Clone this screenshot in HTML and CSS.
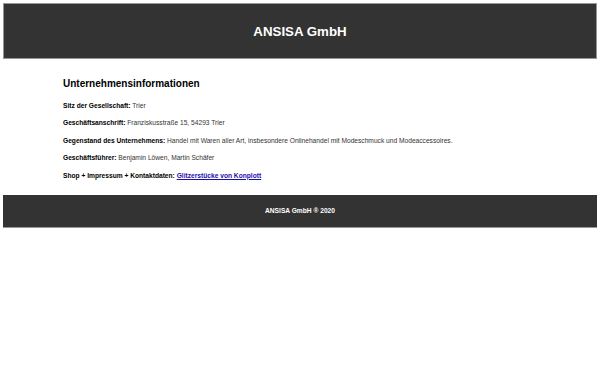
FILE: index.html
```html
<!DOCTYPE html>
<html>

<head>
  <meta charset="UTF-8">
  <title>ANSISA GmbH</title>
  <link rel="stylesheet" href="styles.css">
</head>

<body>
  <header class="header">
    <h1 class="header__title">ANSISA GmbH</h1>
  </header>

  <main class="info">
    <h2 class="info__title">Unternehmensinformationen</h2>
    <p class="info__row"><b>Sitz der Gesellschaft:</b> Trier</p>
    <p class="info__row"><b>Geschäftsanschrift:</b> Franziskusstraße 15, 54293 Trier</p>
    <p class="info__row"><b>Gegenstand des Unternehmens:</b> Handel mit Waren aller Art, insbesondere Onlinehandel mit Modeschmuck und Modeaccessoires.</p>
    <p class="info__row"><b>Geschäftsführer:</b> Benjamin Löwen, Martin Schäfer</p>
    <p class="info__row"><b>Shop + Impressum + Kontaktdaten:</b> <a class="info__link" href="#">Glitzerstücke von Konplott</a></p>
  </main>

  <footer class="footer">
    <p class="footer__text">ANSISA GmbH &reg; 2020</p>
  </footer>
</body>

</html>
```

FILE: styles.css
```css
body {
  margin: 3px;
  font-family: "Liberation Sans", Arial, Helvetica, sans-serif;
  background-color: white;
}

.header {
  height: 54px;
  display: flex;
  justify-content: center;
  align-items: center;
  background-color: rgb(51, 51, 51);
  border: 1px solid rgb(150, 150, 150);
}

.header__title {
  margin: 0;
  font-size: 13.3px;
  font-weight: 700;
  color: white;
}

.info {
  padding: 18px 60px 6px;
}

.info__title {
  margin: 0 0 12px;
  font-size: 10px;
  line-height: 13px;
  font-weight: 700;
  color: black;
}

.info__row {
  margin: 0 0 9.4px;
  font-size: 6.65px;
  line-height: 8px;
  color: rgb(51, 51, 51);
}

.info__row b {
  color: black;
}

.info__link {
  font-weight: 700;
  color: rgb(26, 13, 171);
}

.footer {
  height: 32px;
  display: flex;
  justify-content: center;
  align-items: center;
  background-color: rgb(51, 51, 51);
  border-bottom: 1px solid rgb(150, 150, 150);
}

.footer__text {
  margin: 0;
  font-size: 6.65px;
  font-weight: 700;
  color: white;
}
```
